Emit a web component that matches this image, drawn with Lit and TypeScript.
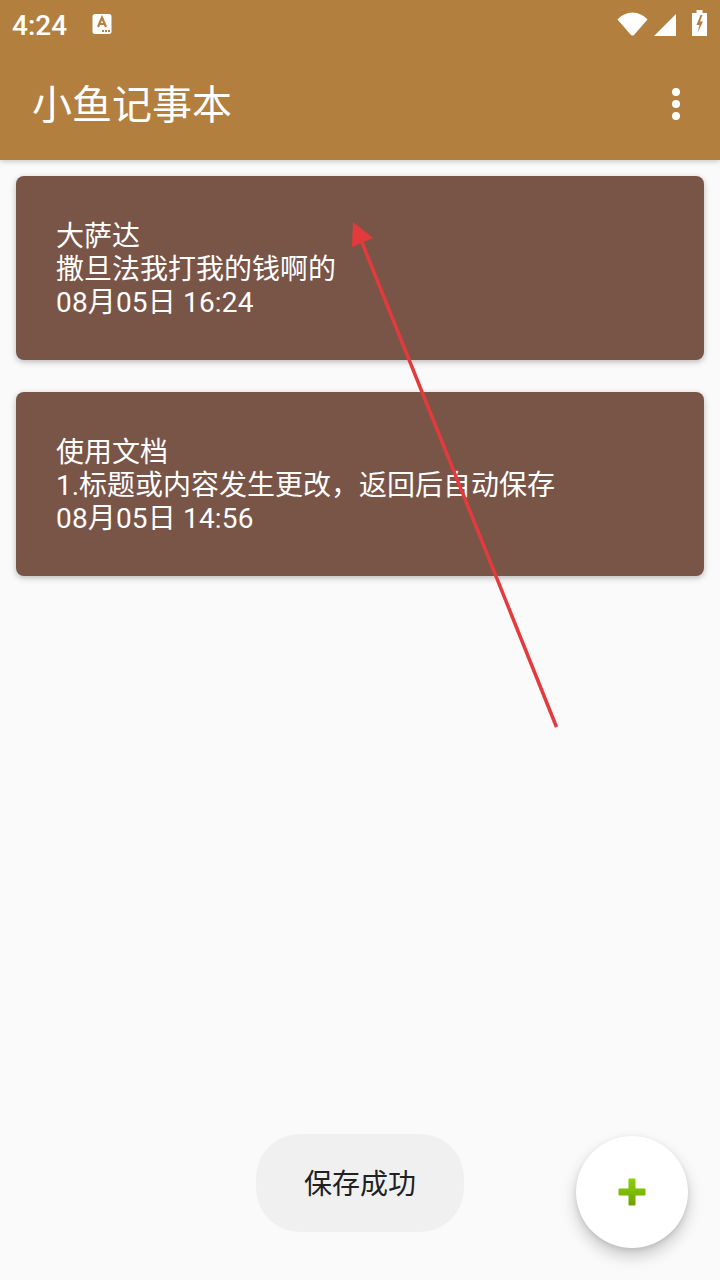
import { LitElement, html, css } from "lit";
import { customElement } from "lit/decorators.js";

const notes = [
  ["大萨达", "撒旦法我打我的钱啊的", "08月05日 16:24"],
  ["使用文档", "1.标题或内容发生更改，返回后自动保存", "08月05日 14:56"],
];

@customElement("app-root")
export class AppRoot extends LitElement {
  static styles = css`
    :host {
      display: block;
      position: relative;
      width: 720px;
      height: 1280px;
      overflow: hidden;
      background: #fafafa;
      font-family: Roboto, "Noto Sans CJK SC", sans-serif;
    }
    .appbar {
      background: #b37f3f;
      height: 160px;
      display: flex;
      flex-direction: column;
      color: #fff;
      box-shadow: 0 2px 5px rgba(0, 0, 0, 0.18);
      position: relative;
    }
    .status {
      height: 48px;
      display: flex;
      align-items: center;
      padding: 2px 13px 0 12px;
      box-sizing: border-box;
      font-size: 28px;
      font-weight: 500;
    }
    .time {
      width: 80px;
    }
    .status-left {
      flex: 1;
      display: flex;
      align-items: center;
    }
    .a-icon {
      display: block;
      margin-top: -2px;
    }
    .status-right {
      display: flex;
      align-items: flex-end;
      height: 26px;
      margin-top: -4px;
    }
    .wifi {
      margin-right: 6px;
    }
    .cell {
      margin-right: 16px;
    }
    .toolbar {
      flex: 1;
      display: flex;
      align-items: center;
      justify-content: space-between;
      padding: 0 40px 0 32px;
    }
    .title {
      font-size: 40px;
      line-height: 48px;
      margin-top: 4px;
    }
    .menu {
      display: flex;
      flex-direction: column;
      gap: 4px;
    }
    .menu i {
      width: 8px;
      height: 8px;
      border-radius: 50%;
      background: #fff;
    }
    .list {
      display: flex;
      flex-direction: column;
      gap: 32px;
      padding: 16px;
    }
    .card {
      background: #795548;
      height: 184px;
      box-sizing: border-box;
      border-radius: 8px;
      padding: 44px 40px;
      color: #fff;
      font-size: 28px;
      line-height: 33px;
      box-shadow: 0 2px 6px rgba(0, 0, 0, 0.26);
    }
    .date {
      letter-spacing: 0.16px;
    }
    .arrow {
      position: absolute;
      left: 0;
      top: 0;
      pointer-events: none;
    }
    .toast {
      position: absolute;
      left: 256px;
      top: 1134px;
      width: 208px;
      height: 98px;
      box-sizing: border-box;
      padding-bottom: 2px;
      border-radius: 44px;
      background: #f0f0f0;
      color: #212121;
      font-size: 28px;
      display: flex;
      align-items: center;
      justify-content: center;
    }
    .fab {
      position: absolute;
      left: 576px;
      top: 1136px;
      width: 112px;
      height: 112px;
      border-radius: 50%;
      background: #fff;
      display: flex;
      align-items: center;
      justify-content: center;
      box-shadow: 0 8px 16px rgba(0, 0, 0, 0.2), 0 2px 5px rgba(0, 0, 0, 0.1);
    }
    .plus {
      display: block;
    }
  `;

  render() {
    return html`
      <div class="appbar">
        <div class="status">
          <div class="status-left">
            <span class="time">4:24</span>
            <svg class="a-icon" width="20" height="22" viewBox="0 0 20 22">
              <rect x="0.5" y="1" width="19" height="20" rx="2.5" fill="#fff" />
              <path d="M6 14 L10 4.5 L14 14 M7.5 11 H12.5" fill="none" stroke="#b37f3f" stroke-width="2.2" />
              <path d="M10 17h2v2h-2zM13 17h2v2h-2zM16 17h2v2h-2z" fill="#b37f3f" />
            </svg>
          </div>
          <div class="status-right">
            <svg class="wifi" width="31" height="24" viewBox="0 0 31 24">
              <path d="M0.5 7.5 C4 3.5 10 0.5 15.5 0.5 C21 0.5 27 3.5 30.5 7.5 L17 23 Q15.5 24 14 23 Z" fill="#fff" />
            </svg>
            <svg class="cell" width="22" height="22" viewBox="0 0 22 22">
              <path d="M22 0 V22 H0 Z" fill="#fff" />
            </svg>
            <svg width="15" height="26" viewBox="0 0 15 26">
              <path fill-rule="evenodd" d="M4.5 0h6v3H15v23H0V3h4.500z M8.500 5 L4.500 15 H7.500 L5.500 23 L11 11.500 H8 L10.500 5 Z" fill="#fff" />
            </svg>
          </div>
        </div>
        <div class="toolbar">
          <span class="title">小鱼记事本</span>
          <div class="menu"><i></i><i></i><i></i></div>
        </div>
      </div>
      <div class="list">
        ${notes.map(
          (n) => html`<div class="card">${n[0]}<br />${n[1]}<br /><span class="date">${n[2]}</span></div>`
        )}
      </div>
      <svg class="arrow" width="720" height="1280" viewBox="0 0 720 1280">
        <line x1="556.500" y1="727" x2="361" y2="240" stroke="#e53a3d" stroke-width="3.500" />
        <polygon points="353,222 373,238 352,247" fill="#e53a3d" />
      </svg>
      <div class="toast">保存成功</div>
      <div class="fab">
        <svg class="plus" width="28" height="28" viewBox="0 0 28 28">
          <defs>
            <linearGradient id="plusFill" x1="0" y1="0" x2="0" y2="1">
              <stop offset="0" stop-color="#8ccf00" />
              <stop offset="0.5" stop-color="#7dbb00" />
              <stop offset="1" stop-color="#6f9f00" />
            </linearGradient>
          </defs>
          <path d="M10.500 1.500 Q10.500 0.500 11.500 0.500 H16.500 Q17.500 0.500 17.500 1.500 V10.500 H26.500 Q27.500 10.500 27.500 11.500 V16.500 Q27.500 17.500 26.500 17.500 H17.500 V26.500 Q17.500 27.500 16.500 27.500 H11.500 Q10.500 27.500 10.500 26.500 V17.500 H1.500 Q0.500 17.500 0.500 16.500 V11.500 Q0.500 10.500 1.500 10.500 H10.500 Z" fill="url(#plusFill)" />
        </svg>
      </div>
    `;
  }
}
